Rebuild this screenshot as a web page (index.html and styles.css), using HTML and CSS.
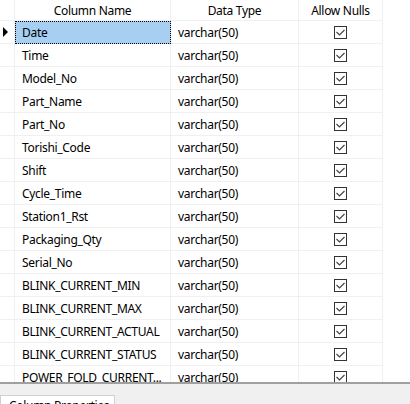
FILE: index.html
```html
<!DOCTYPE html>
<html>
<head>
<meta charset="utf-8">
<link rel="stylesheet" href="styles.css">
</head>
<body>
<div class="designer">
  <div class="grid">
    <div class="row head">
      <div class="cell rh"></div>
      <div class="cell name">Column Name</div>
      <div class="cell type">Data Type</div>
      <div class="cell nulls">Allow Nulls</div>
    </div>
    <div class="row">
      <div class="cell rh"><span class="arrow"></span></div>
      <div class="cell name sel">Date</div>
      <div class="cell type">varchar(50)</div>
      <div class="cell nulls"><span class="chk"><svg width="11" height="11" viewBox="0 0 11 11"><path d="M1.5 5 L4.5 8 L9.5 3" fill="none" stroke="#444" stroke-width="1.2"/></svg></span></div>
    </div>
    <div class="row"><div class="cell rh"></div><div class="cell name">Time</div><div class="cell type">varchar(50)</div><div class="cell nulls"><span class="chk"><svg width="11" height="11" viewBox="0 0 11 11"><path d="M1.5 5 L4.5 8 L9.5 3" fill="none" stroke="#444" stroke-width="1.2"/></svg></span></div></div>
    <div class="row"><div class="cell rh"></div><div class="cell name">Model_No</div><div class="cell type">varchar(50)</div><div class="cell nulls"><span class="chk"><svg width="11" height="11" viewBox="0 0 11 11"><path d="M1.5 5 L4.5 8 L9.5 3" fill="none" stroke="#444" stroke-width="1.2"/></svg></span></div></div>
    <div class="row"><div class="cell rh"></div><div class="cell name">Part_Name</div><div class="cell type">varchar(50)</div><div class="cell nulls"><span class="chk"><svg width="11" height="11" viewBox="0 0 11 11"><path d="M1.5 5 L4.5 8 L9.5 3" fill="none" stroke="#444" stroke-width="1.2"/></svg></span></div></div>
    <div class="row"><div class="cell rh"></div><div class="cell name">Part_No</div><div class="cell type">varchar(50)</div><div class="cell nulls"><span class="chk"><svg width="11" height="11" viewBox="0 0 11 11"><path d="M1.5 5 L4.5 8 L9.5 3" fill="none" stroke="#444" stroke-width="1.2"/></svg></span></div></div>
    <div class="row"><div class="cell rh"></div><div class="cell name">Torishi_Code</div><div class="cell type">varchar(50)</div><div class="cell nulls"><span class="chk"><svg width="11" height="11" viewBox="0 0 11 11"><path d="M1.5 5 L4.5 8 L9.5 3" fill="none" stroke="#444" stroke-width="1.2"/></svg></span></div></div>
    <div class="row"><div class="cell rh"></div><div class="cell name">Shift</div><div class="cell type">varchar(50)</div><div class="cell nulls"><span class="chk"><svg width="11" height="11" viewBox="0 0 11 11"><path d="M1.5 5 L4.5 8 L9.5 3" fill="none" stroke="#444" stroke-width="1.2"/></svg></span></div></div>
    <div class="row"><div class="cell rh"></div><div class="cell name">Cycle_Time</div><div class="cell type">varchar(50)</div><div class="cell nulls"><span class="chk"><svg width="11" height="11" viewBox="0 0 11 11"><path d="M1.5 5 L4.5 8 L9.5 3" fill="none" stroke="#444" stroke-width="1.2"/></svg></span></div></div>
    <div class="row"><div class="cell rh"></div><div class="cell name">Station1_Rst</div><div class="cell type">varchar(50)</div><div class="cell nulls"><span class="chk"><svg width="11" height="11" viewBox="0 0 11 11"><path d="M1.5 5 L4.5 8 L9.5 3" fill="none" stroke="#444" stroke-width="1.2"/></svg></span></div></div>
    <div class="row"><div class="cell rh"></div><div class="cell name">Packaging_Qty</div><div class="cell type">varchar(50)</div><div class="cell nulls"><span class="chk"><svg width="11" height="11" viewBox="0 0 11 11"><path d="M1.5 5 L4.5 8 L9.5 3" fill="none" stroke="#444" stroke-width="1.2"/></svg></span></div></div>
    <div class="row"><div class="cell rh"></div><div class="cell name">Serial_No</div><div class="cell type">varchar(50)</div><div class="cell nulls"><span class="chk"><svg width="11" height="11" viewBox="0 0 11 11"><path d="M1.5 5 L4.5 8 L9.5 3" fill="none" stroke="#444" stroke-width="1.2"/></svg></span></div></div>
    <div class="row"><div class="cell rh"></div><div class="cell name">BLINK_CURRENT_MIN</div><div class="cell type">varchar(50)</div><div class="cell nulls"><span class="chk"><svg width="11" height="11" viewBox="0 0 11 11"><path d="M1.5 5 L4.5 8 L9.5 3" fill="none" stroke="#444" stroke-width="1.2"/></svg></span></div></div>
    <div class="row"><div class="cell rh"></div><div class="cell name">BLINK_CURRENT_MAX</div><div class="cell type">varchar(50)</div><div class="cell nulls"><span class="chk"><svg width="11" height="11" viewBox="0 0 11 11"><path d="M1.5 5 L4.5 8 L9.5 3" fill="none" stroke="#444" stroke-width="1.2"/></svg></span></div></div>
    <div class="row"><div class="cell rh"></div><div class="cell name">BLINK_CURRENT_ACTUAL</div><div class="cell type">varchar(50)</div><div class="cell nulls"><span class="chk"><svg width="11" height="11" viewBox="0 0 11 11"><path d="M1.5 5 L4.5 8 L9.5 3" fill="none" stroke="#444" stroke-width="1.2"/></svg></span></div></div>
    <div class="row"><div class="cell rh"></div><div class="cell name">BLINK_CURRENT_STATUS</div><div class="cell type">varchar(50)</div><div class="cell nulls"><span class="chk"><svg width="11" height="11" viewBox="0 0 11 11"><path d="M1.5 5 L4.5 8 L9.5 3" fill="none" stroke="#444" stroke-width="1.2"/></svg></span></div></div>
    <div class="row"><div class="cell rh"></div><div class="cell name">POWER_FOLD_CURRENT...</div><div class="cell type">varchar(50)</div><div class="cell nulls"><span class="chk"><svg width="11" height="11" viewBox="0 0 11 11"><path d="M1.5 5 L4.5 8 L9.5 3" fill="none" stroke="#444" stroke-width="1.2"/></svg></span></div></div>
  </div>
  <div class="props">
    <div class="tab">Column Properties</div>
  </div>
</div>
</body>
</html>
```

FILE: styles.css
```css
* { box-sizing: border-box; }
html, body { margin: 0; padding: 0; background: #ffffff; }
html { height: 404px; overflow: hidden; }
body {
  font-family: "Noto Sans", "DejaVu Sans", sans-serif;
  font-size: 12px;
  letter-spacing: -0.3px;
  color: #000000;
  width: 410px;
  height: 404px;
  overflow: hidden;
}
.designer { display: flex; flex-direction: column; height: 404px; overflow: hidden; }
.grid {
  height: 382px;
  overflow: hidden;
  background: #ffffff;
  flex: none;
}
.row {
  display: flex;
  height: 23px;
}
.row.head { height: 21px; }
.cell {
  height: 100%;
  border-right: 1px solid #f0f0f0;
  border-bottom: 1px solid #f0f0f0;
  display: flex;
  align-items: center;
  white-space: nowrap;
  overflow: hidden;
}
.rh { width: 15px; justify-content: flex-start; padding-left: 3px; }
.name { width: 156px; padding-left: 7px; }
.type { width: 128px; padding-left: 7px; }
.nulls { width: 84px; justify-content: center; }
.head .cell { justify-content: center; padding-left: 0; }
.sel {
  background: #a6cff1;
  border: 1px dotted #000000;
  padding-left: 6px;
}
.arrow {
  width: 0; height: 0;
  border-top: 5.5px solid transparent;
  border-bottom: 5.5px solid transparent;
  border-left: 5px solid #000000;
}
.chk {
  width: 13px; height: 13px;
  border: 1px solid #333333;
  background: #ffffff;
  display: flex;
  align-items: center;
  justify-content: center;
}
.chk svg { display: block; }
.props {
  flex: 1;
  min-height: 0;
  background: #f0f0f0;
  border-top: 2px solid #a0a0a0;
  padding-top: 11px;
  overflow: hidden;
}
.tab {
  width: 115px;
  height: 20px;
  background: #ffffff;
  border: 1px solid #d0d0d0;
  border-bottom: none;
  padding-left: 8px;
  padding-top: 3px;
  line-height: 14px;
  white-space: nowrap;
  overflow: hidden;
}
```
